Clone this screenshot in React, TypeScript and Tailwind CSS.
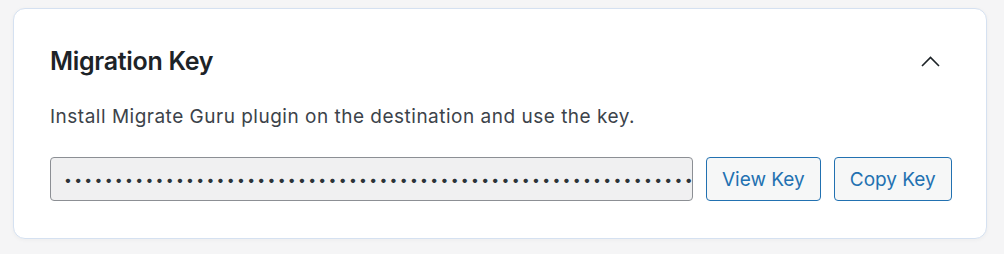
const KEY_DOTS = "•".repeat(62);

const buttonClass =
  "h-[44px] shrink-0 whitespace-nowrap rounded-[4px] border border-[#2271b1] bg-[#f6f7f7] px-[15px] text-[19px] text-[#2271b1] leading-none";

export default function App() {
  return (
    <div
      className="min-h-[254px] w-[1004px] bg-[#f5f5f6] pl-[13px] pr-[17px] pt-[8px]"
      style={{ fontFamily: 'Inter, "Noto Sans", sans-serif' }}
    >
      <section className="h-[231px] rounded-[12px] border border-[#d5e1f1] bg-white px-[36px] shadow-[0_1px_4px_rgba(0,0,0,0.04)]">
        <div className="flex h-[96px] items-center justify-between pt-[8px]">
          <h2 className="text-[25px] font-semibold leading-none tracking-[-0.3px] text-[#1d2327]">
            Migration Key
          </h2>
          <button type="button" aria-label="Collapse" className="mr-[10px] text-[#1d2327]">
            <svg width="19" height="11" viewBox="0 0 19 11" fill="none" stroke="currentColor" strokeWidth="1.6">
              <path d="M1 10L9.5 1.5 18 10" />
            </svg>
          </button>
        </div>
        <p className="text-[19px] leading-[24px] tracking-[0.5px] text-[#3c434a]">
          Install Migrate Guru plugin on the destination and use the key.
        </p>
        <div className="mt-[28px] flex items-center gap-[13px]">
          <div className="flex h-[44px] w-[643px] shrink-0 items-center overflow-hidden whitespace-nowrap rounded-[4px] border border-[#8c8f94] bg-[#f0f0f1] pl-[13px] text-[14px] tracking-[2.3px] text-[#2c3338]">
            {KEY_DOTS}
          </div>
          <button type="button" className={buttonClass}>
            View Key
          </button>
          <button type="button" className={buttonClass}>
            Copy Key
          </button>
        </div>
      </section>
    </div>
  );
}
